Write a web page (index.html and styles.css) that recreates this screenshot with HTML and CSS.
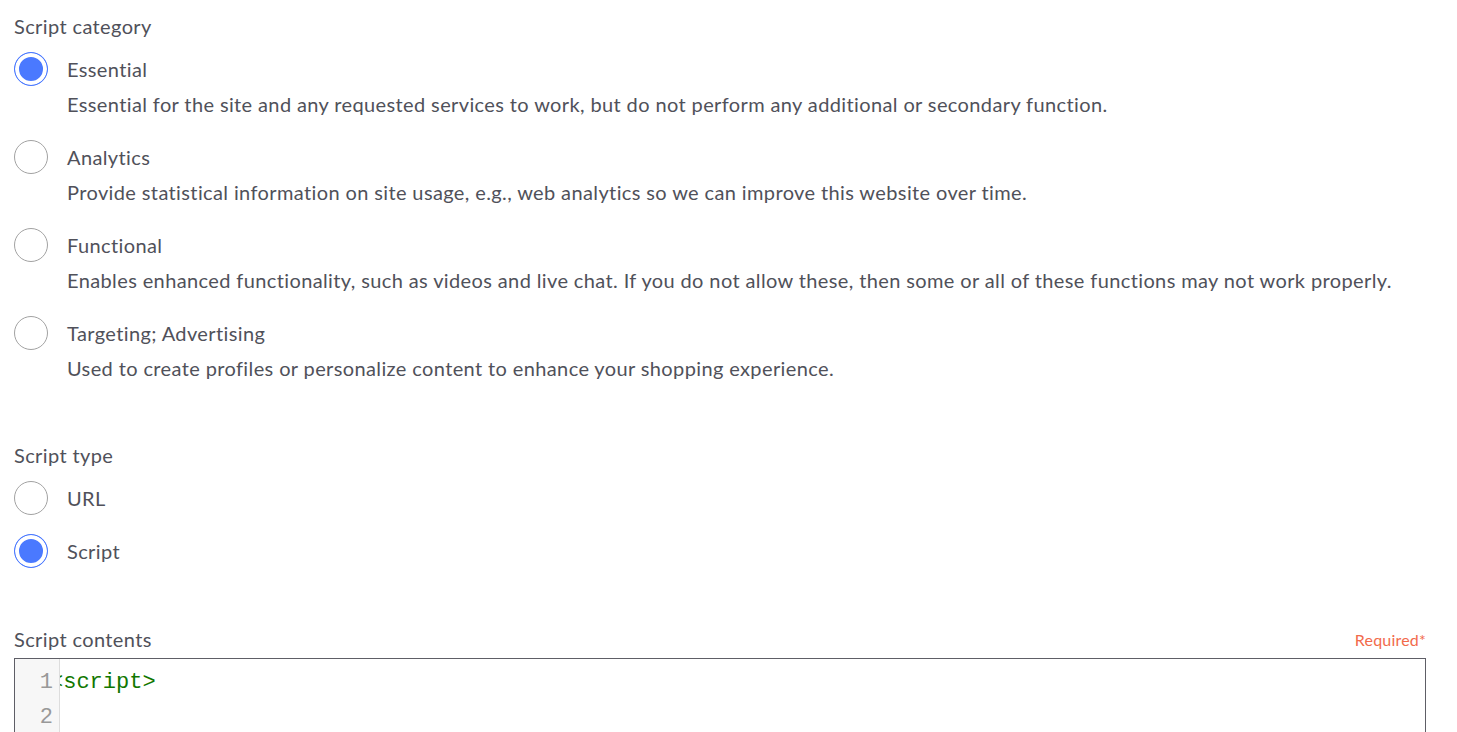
FILE: index.html
```html
<!DOCTYPE html>
<html lang="en">
<head>
    <meta charset="UTF-8">
    <title>Script settings</title>
    <link rel="stylesheet" href="styles.css">
</head>
<body>
    <form class="script-form">
        <div class="field">
            <div class="field-label">Script category</div>
            <div class="option">
                <span class="radio checked"></span>
                <div class="option-body">
                    <div class="option-title">Essential</div>
                    <div class="option-desc">Essential for the site and any requested services to work, but do not perform any additional or secondary function.</div>
                </div>
            </div>
            <div class="option">
                <span class="radio"></span>
                <div class="option-body">
                    <div class="option-title">Analytics</div>
                    <div class="option-desc">Provide statistical information on site usage, e.g., web analytics so we can improve this website over time.</div>
                </div>
            </div>
            <div class="option">
                <span class="radio"></span>
                <div class="option-body">
                    <div class="option-title">Functional</div>
                    <div class="option-desc">Enables enhanced functionality, such as videos and live chat. If you do not allow these, then some or all of these functions may not work properly.</div>
                </div>
            </div>
            <div class="option">
                <span class="radio"></span>
                <div class="option-body">
                    <div class="option-title">Targeting; Advertising</div>
                    <div class="option-desc">Used to create profiles or personalize content to enhance your shopping experience.</div>
                </div>
            </div>
        </div>

        <div class="field field-type">
            <div class="field-label">Script type</div>
            <div class="option option-short">
                <span class="radio"></span>
                <div class="option-title">URL</div>
            </div>
            <div class="option option-short">
                <span class="radio checked"></span>
                <div class="option-title">Script</div>
            </div>
        </div>

        <div class="field field-contents">
            <div class="field-head">
                <div class="field-label">Script contents</div>
                <span class="required">Required*</span>
            </div>
            <div class="editor">
                <div class="gutter">
                    <div class="line-no">1</div>
                    <div class="line-no">2</div>
                </div>
                <div class="code">
                    <div class="code-line"><span class="tag">&lt;script&gt;</span></div>
                    <div class="code-line"></div>
                </div>
            </div>
        </div>
    </form>
</body>
</html>
```

FILE: styles.css
```css
* {
    margin: 0;
    padding: 0;
    box-sizing: border-box;
}

body {
    font-family: Lato, "Noto Sans", sans-serif;
    font-size: 20px;
    letter-spacing: 0.38px;
    color: #50515a;
    background: #fff;
    padding: 12px 31px 0 14px;
}

.field-label {
    line-height: 28px;
}

.field > .field-label {
    margin-bottom: 12px;
}

.option {
    display: flex;
    margin-bottom: 18px;
}

.radio {
    flex: none;
    width: 34px;
    height: 34px;
    border-radius: 50%;
    border: 1.5px solid #a2a2a2;
    margin-right: 19px;
}

.radio.checked {
    border-color: #4a79ff;
    background: #4a79ff;
    box-shadow: inset 0 0 0 4px #fff;
}

.option-title {
    line-height: 34px;
}

.option-desc {
    line-height: 36px;
}

.field-type {
    margin-top: 55px;
}

.option-short {
    margin-bottom: 19px;
}

.field-contents {
    margin-top: 57px;
}

.field-head {
    display: flex;
    justify-content: space-between;
    align-items: center;
    margin-bottom: 5px;
}

.field-contents .field-label {
    margin-bottom: 0;
}

.required {
    font-size: 16px;
    letter-spacing: 0.2px;
    color: #f26a4b;
}

.editor {
    display: flex;
    border: 1px solid #5e5e66;
    height: 200px;
    font-family: "Liberation Mono", "Courier New", monospace;
    font-size: 22px;
    letter-spacing: 0;
}

.gutter {
    width: 45px;
    background: #f7f7f7;
    border-right: 1px solid #ddd;
    padding: 6px 6px 0 0;
    text-align: right;
    color: #999;
}

.line-no,
.code-line {
    line-height: 35px;
    height: 35px;
}

.code {
    flex: 1;
    overflow: hidden;
    padding-top: 6px;
    text-indent: -10px;
}

.tag {
    color: #117700;
}
```
